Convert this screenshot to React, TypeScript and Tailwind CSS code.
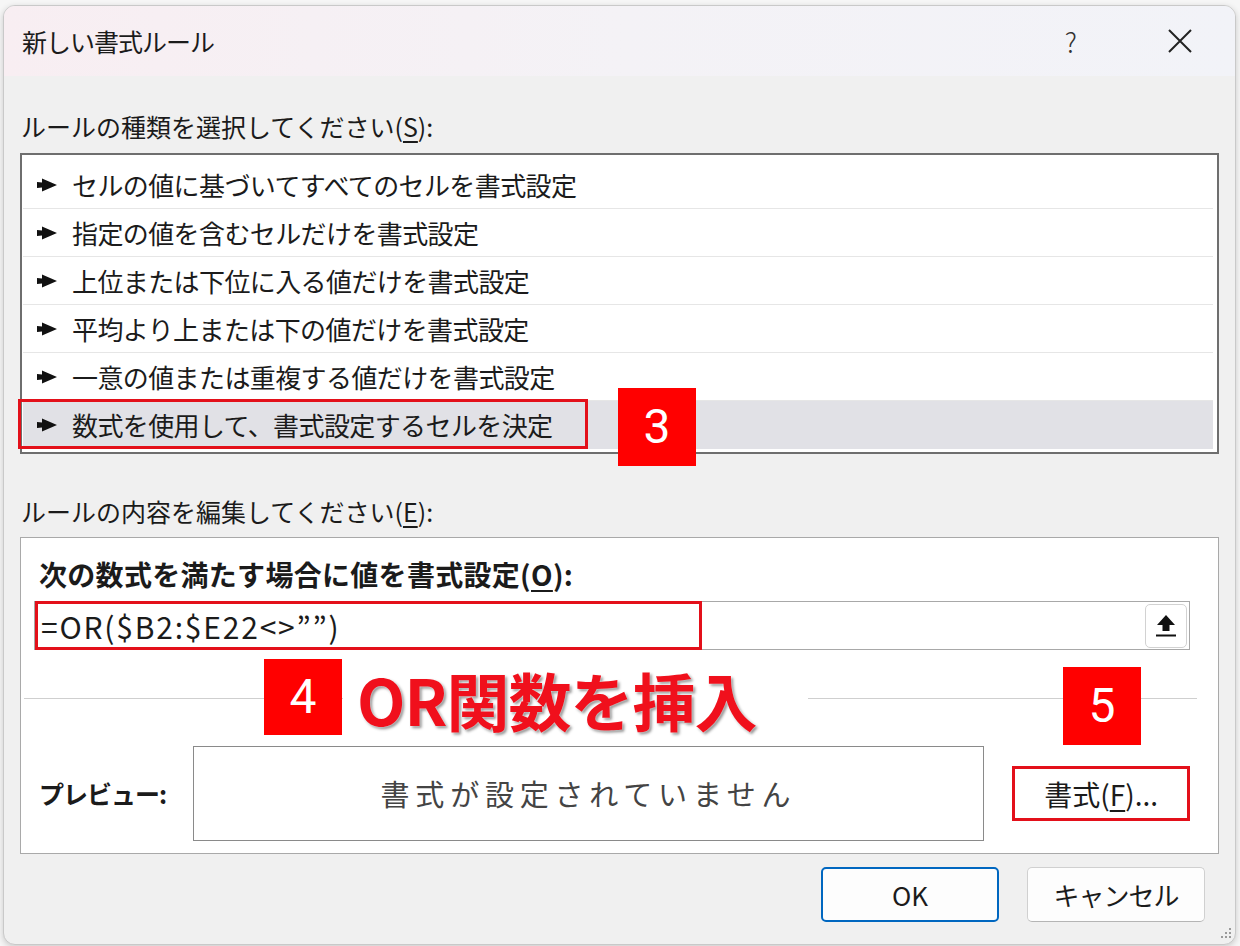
import React from "react";

const jp = "font-['Noto_Sans_CJK_JP','Noto_Sans',sans-serif]";

const rules = [
  "セルの値に基づいてすべてのセルを書式設定",
  "指定の値を含むセルだけを書式設定",
  "上位または下位に入る値だけを書式設定",
  "平均より上または下の値だけを書式設定",
  "一意の値または重複する値だけを書式設定",
  "数式を使用して、書式設定するセルを決定",
];

function Pointer() {
  return (
    <svg width="20" height="14" viewBox="0 0 20 14" className="shrink-0">
      <polygon points="0,4 5,4.5 5,0.5 20,7 5,13.5 5,9.5 0,10" fill="#111" />
    </svg>
  );
}

function Badge({ n, className }: { n: string; className: string }) {
  return (
    <div
      className={
        "absolute flex items-center justify-center bg-[#ff0000] text-white font-['Roboto',sans-serif] font-normal text-[48px] leading-none " +
        className
      }
    >
      {n}
    </div>
  );
}

export default function App() {
  return (
    <div
      className={`${jp} w-[1240px] h-[946px] bg-[#f6f6f6] pt-[5px] pl-[3px] pr-[4px] text-[#1b1b1b] overflow-hidden`}
    >
      <div className="rounded-[12px] border border-[#c9c9c9] bg-[#f0f0f0] shadow-[0_2px_6px_rgba(0,0,0,0.18)] overflow-hidden">
        {/* title bar */}
        <div className="h-[70px] flex items-center pl-[18px] bg-gradient-to-r from-[#f8eef2] via-[#f4f2f6] to-[#f2f3f8]">
          <span className="text-[25px] leading-none tracking-[-1px]">新しい書式ルール</span>
          <span className="ml-auto text-[27px] font-light text-[#333] leading-none mr-[90px]">?</span>
          <svg width="26" height="26" viewBox="0 0 26 26" className="mr-[42px]">
            <path d="M2 2 L24 24 M24 2 L2 24" stroke="#222" strokeWidth="2" />
          </svg>
        </div>

        <div className="px-[16px]">
          <div className="mt-[33px] h-[34px] flex items-center pl-[1px] text-[25px] leading-none">
            ルールの種類を選択してください(<span className="underline underline-offset-[4px]">S</span>):
          </div>

          {/* rule type list */}
          <div className="relative mt-[10px] h-[301px] bg-white border-2 border-[#6e6e6e] pt-[6px]">
            <div className="ml-[1px] mr-[4px]">
              {rules.map((r, i) => (
                <div
                  key={r}
                  className={
                    "h-[48px] flex items-center gap-[15px] pl-[14px] text-[26px] leading-none " +
                    (i === 5 ? "bg-[#e1e1e6]" : "border-b border-[#e6e6e6]")
                  }
                >
                  <Pointer />
                  <span className="tracking-[-0.6px]">{r}</span>
                </div>
              ))}
            </div>
            <div className="absolute left-[-4px] top-[244px] w-[570px] h-[50px] border-[3px] border-[#e3101a]" />
            <Badge n="3" className="left-[596px] top-[233px] w-[78px] h-[78px]" />
          </div>

          <div className="mt-[40px] h-[34px] flex items-center pl-[1px] text-[25px] leading-none">
            ルールの内容を編集してください(<span className="underline underline-offset-[4px]">E</span>):
          </div>

          {/* rule edit box */}
          <div className="relative mt-[9px] bg-white border border-[#a9a9a9] pl-[13px] pr-[28px] pt-[19px] pb-[12px]">
            <div className="ml-[5px] h-[34px] flex items-center text-[28px] font-bold leading-none tracking-[0.3px]">
              次の数式を満たす場合に値を書式設定(<span className="underline underline-offset-[4px]">O</span>):
            </div>

            <div className="relative mt-[10px] h-[49px] border border-[#a8a8a8] flex items-center pl-[6px]">
              <span className="text-[30px] leading-none tracking-[1.8px]">=OR($B2:$E22&lt;&gt;””)</span>
              <div className="ml-auto mr-[2px] w-[42px] h-[44px] rounded-[5px] border border-[#d2d2d2] bg-white flex items-center justify-center">
                <svg width="24" height="26" viewBox="0 0 24 26">
                  <path d="M12 2 L21 12 L15.5 12 L15.5 18 L8.5 18 L8.5 12 L3 12 Z" fill="#111" />
                  <rect x="2" y="21.5" width="20" height="2" fill="#111" />
                </svg>
              </div>
              <div className="absolute left-0 top-[-1px] w-[667px] h-[49px] border-[3px] border-[#e3101a]" />
            </div>

            <div className="mt-[48px] -ml-[10px] -mr-[7px] h-px bg-[#cfcfcf]" />

            <div className="mt-[47px] flex items-center">
              <span className="ml-[5px] w-[154px] text-[25px] font-bold leading-none tracking-[-1px]">プレビュー:</span>
              <div className="w-[793px] h-[95px] border-[1.5px] border-[#8a8a8a] flex items-center justify-center bg-white">
                <span className="text-[29px] tracking-[5.8px] text-[#444] leading-none">書式が設定されていません</span>
              </div>
              <div className="ml-[28px] w-[178px] h-[55px] border-[3px] border-[#e3101a] bg-white flex items-center justify-center text-[28px] leading-none">
                書式(<span className="underline underline-offset-[4px]">F</span>)...
              </div>
            </div>

            {/* annotations */}
            <Badge n="4" className="left-[243px] top-[121px] w-[78px] h-[76px]" />
            <div className="absolute left-[322px] top-[127px] w-[465px] h-[66px] bg-white flex items-center pl-[14px]">
              <span className="text-[63px] font-bold leading-none text-[#f0101c] tracking-[-1px] [text-shadow:0_0_2px_#fff,2px_2px_3px_rgba(0,0,0,0.45)]">
                OR関数を挿入
              </span>
            </div>
            <Badge n="5" className="left-[1042px] top-[129px] w-[78px] h-[78px]" />
          </div>

          {/* buttons */}
          <div className="mt-[13px] mb-[22px] flex justify-end gap-[28px] pr-[14px]">
            <div className="w-[178px] h-[55px] rounded-[5px] border-2 border-[#0067c0] bg-[#fdfdfd] flex items-center justify-center text-[26px] leading-none">
              OK
            </div>
            <div className="w-[178px] h-[55px] rounded-[5px] border border-[#d0d0d0] border-b-[#b5b5b5] bg-[#fdfdfd] flex items-center justify-center text-[26px] leading-none tracking-[-1px]">
              キャンセル
            </div>
          </div>
        </div>
        <div className="relative">
          <svg width="14" height="14" viewBox="0 0 14 14" className="absolute right-[3px] bottom-[4px]">
            {[
              [11, 2],
              [11, 6],
              [7, 6],
              [11, 10],
              [7, 10],
              [3, 10],
            ].map(([x, y]) => (
              <rect key={`${x}-${y}`} x={x} y={y} width="2" height="2" fill="#9a9a9a" />
            ))}
          </svg>
        </div>
      </div>
    </div>
  );
}
